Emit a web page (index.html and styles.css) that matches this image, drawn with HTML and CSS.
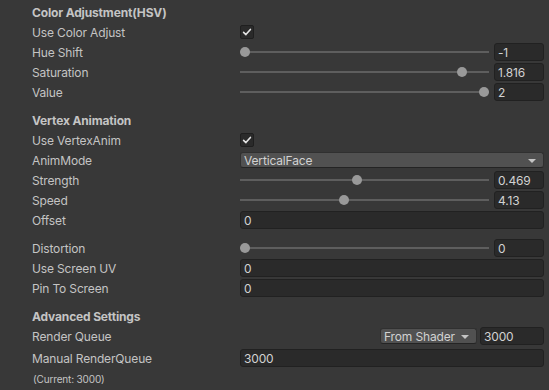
FILE: index.html
```html
<!DOCTYPE html>
<html lang="en">
  <head>
    <meta charset="UTF-8" />
    <title>Material Inspector</title>
    <link rel="stylesheet" href="styles.css">
  </head>
  <body>
    <div class="inspector">

      <section class="group">
        <div class="row header"><span class="label">Color Adjustment(HSV)</span></div>
        <div class="row">
          <span class="label">Use Color Adjust</span>
          <div class="control">
            <span class="checkbox">
              <svg width="14" height="14" viewBox="0 0 14 14"><polyline points="3.6,7.4 5.9,9.6 10.4,4.4" /></svg>
            </span>
          </div>
        </div>
        <div class="row">
          <span class="label">Hue Shift</span>
          <div class="control slider">
            <div class="track"><span class="knob" style="--v: 0"></span></div>
            <span class="field value">-1</span>
          </div>
        </div>
        <div class="row">
          <span class="label">Saturation</span>
          <div class="control slider">
            <div class="track"><span class="knob" style="--v: 0.908"></span></div>
            <span class="field value">1.816</span>
          </div>
        </div>
        <div class="row">
          <span class="label">Value</span>
          <div class="control slider">
            <div class="track"><span class="knob" style="--v: 1"></span></div>
            <span class="field value">2</span>
          </div>
        </div>
      </section>

      <section class="group">
        <div class="row header"><span class="label">Vertex Animation</span></div>
        <div class="row">
          <span class="label">Use VertexAnim</span>
          <div class="control">
            <span class="checkbox">
              <svg width="14" height="14" viewBox="0 0 14 14"><polyline points="3.6,7.4 5.9,9.6 10.4,4.4" /></svg>
            </span>
          </div>
        </div>
        <div class="row">
          <span class="label">AnimMode</span>
          <div class="control">
            <span class="dropdown wide">VerticalFace<i class="arrow"></i></span>
          </div>
        </div>
        <div class="row">
          <span class="label">Strength</span>
          <div class="control slider">
            <div class="track"><span class="knob" style="--v: 0.469"></span></div>
            <span class="field value">0.469</span>
          </div>
        </div>
        <div class="row">
          <span class="label">Speed</span>
          <div class="control slider">
            <div class="track"><span class="knob" style="--v: 0.413"></span></div>
            <span class="field value">4.13</span>
          </div>
        </div>
        <div class="row">
          <span class="label">Offset</span>
          <div class="control"><span class="field wide">0</span></div>
        </div>

        <div class="spacer"></div>

        <div class="row">
          <span class="label">Distortion</span>
          <div class="control slider">
            <div class="track"><span class="knob" style="--v: 0"></span></div>
            <span class="field value">0</span>
          </div>
        </div>
        <div class="row">
          <span class="label">Use Screen UV</span>
          <div class="control"><span class="field wide">0</span></div>
        </div>
        <div class="row">
          <span class="label">Pin To Screen</span>
          <div class="control"><span class="field wide">0</span></div>
        </div>
      </section>

      <section class="group">
        <div class="row header"><span class="label">Advanced Settings</span></div>
        <div class="row">
          <span class="label">Render Queue</span>
          <div class="control right">
            <span class="dropdown mode">From Shader<i class="arrow"></i></span>
            <span class="field queue-value">3000</span>
          </div>
        </div>
        <div class="row manual">
          <span class="label">Manual RenderQueue</span>
          <div class="control"><span class="field wide">3000</span></div>
        </div>
        <div class="row note"><span class="label">(Current: 3000)</span></div>
      </section>

    </div>
  </body>
</html>
```

FILE: styles.css
```css
html {
  box-sizing: border-box;
}

*,
*::before,
*::after {
  margin: 0;
  padding: 0;
  box-sizing: inherit;
}

body {
  background: #383838;
  color: #c4c4c4;
  font-family: "Inter", "Noto Sans", sans-serif;
  font-size: 12px;
  letter-spacing: -0.15px;
  min-height: 100vh;
}

.inspector {
  padding: 3px 5px 0 32px;
}

.group {
  display: flex;
  flex-direction: column;
  gap: 2px;
}

.group + .group {
  margin-top: 10px;
}

.row {
  display: flex;
  align-items: center;
  height: 18px;
}

.row.header .label {
  font-weight: 700;
}

.row.manual {
  margin-top: 2px;
}

.row.note .label {
  font-size: 10px;
  padding-left: 1px;
}

.label {
  width: 208px;
  flex: none;
  height: 18px;
  line-height: 16px;
  padding-top: 2px;
  white-space: nowrap;
}

.control {
  flex: 1;
  display: flex;
  align-items: center;
  min-width: 0;
}

.control.right {
  justify-content: flex-end;
  gap: 3px;
}

.spacer {
  height: 6px;
}

/* checkbox */
.checkbox {
  width: 14px;
  height: 14px;
  background: #2a2a2a;
  border: 1px solid #1f1f1f;
  border-radius: 2px;
  display: flex;
  align-items: center;
  justify-content: center;
}

.checkbox svg {
  flex: none;
  fill: none;
  stroke: #e4e4e4;
  stroke-width: 1.6;
  stroke-linecap: round;
  stroke-linejoin: round;
}

/* text fields */
.field {
  height: 18px;
  line-height: 16px;
  padding: 1px 3px 0;
  background: #2a2a2a;
  border: 1px solid #212121;
  border-radius: 3px;
  color: #d2d2d2;
  white-space: nowrap;
}

.field.wide {
  flex: 1;
}

.field.value {
  width: 50px;
  flex: none;
}

.field.queue-value {
  width: 64px;
  flex: none;
}

/* slider */
.slider {
  gap: 5px;
}

.track {
  flex: 1;
  height: 18px;
  position: relative;
}

.track::before {
  content: "";
  position: absolute;
  left: 0;
  right: 0;
  top: 8px;
  height: 2px;
  background: #5e5e5e;
}

.knob {
  position: absolute;
  top: 4px;
  left: calc(var(--v) * (100% - 10px));
  width: 10px;
  height: 10px;
  border-radius: 50%;
  background: #999999;
}

/* dropdown */
.dropdown {
  position: relative;
  height: 16px;
  line-height: 15px;
  background: #515151;
  border: 1px solid #303030;
  border-bottom-color: #242424;
  border-radius: 3px;
  color: #d2d2d2;
  padding: 0 3px;
  white-space: nowrap;
}

.dropdown.wide {
  flex: 1;
}

.dropdown.mode {
  width: 97px;
  flex: none;
}

.dropdown .arrow {
  position: absolute;
  right: 7px;
  top: 6px;
  width: 0;
  height: 0;
  border-left: 4px solid transparent;
  border-right: 4px solid transparent;
  border-top: 4px solid #c4c4c4;
}
```
